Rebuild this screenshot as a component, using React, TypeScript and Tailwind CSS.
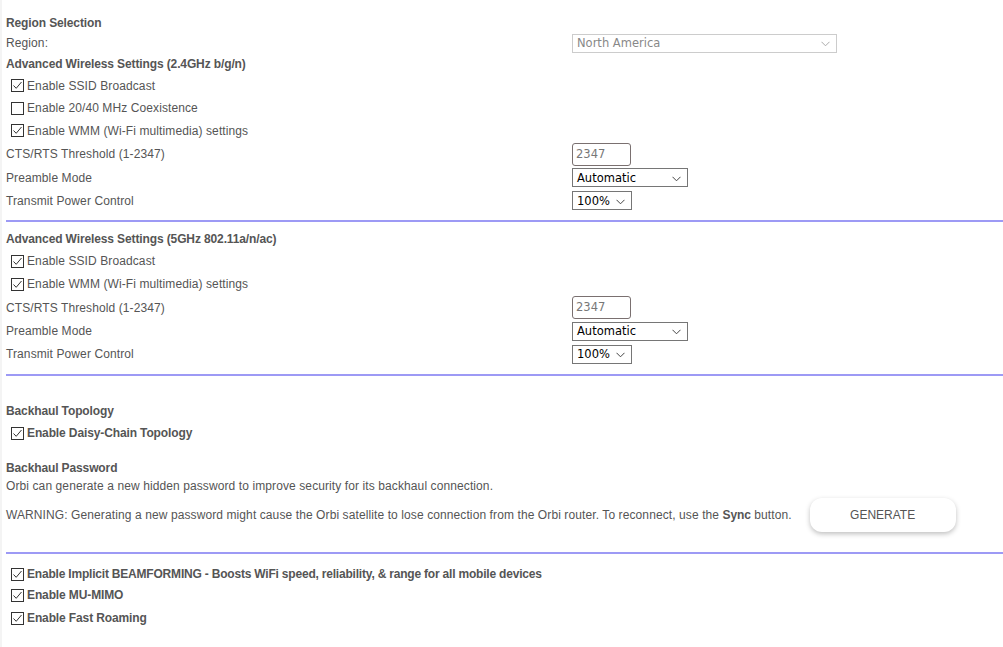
import React from 'react';

const Check = ({ checked }: { checked: boolean }) => (
  <span className="ml-[5px] mr-[3px] inline-flex h-[13px] w-[13px] shrink-0 items-center justify-center border border-[#333] bg-white">
    {checked && (
      <svg width="11" height="11" viewBox="0 0 11 11" fill="none">
        <path d="M1.5 5.5 L4.2 8.3 L9.5 2" stroke="#333" strokeWidth="1" />
      </svg>
    )}
  </span>
);

const Chevron = ({ color }: { color: string }) => (
  <svg width="9" height="6" viewBox="0 0 9 6" fill="none" className="shrink-0">
    <path d="M0.5 0.8 L4.5 4.8 L8.5 0.8" stroke={color} strokeWidth="1" />
  </svg>
);

const Select = ({ value, width, light }: { value: string; width: string; light?: boolean }) => (
  <div
    className={`flex h-[19px] items-center justify-between pl-[4px] pr-[6px] pt-[2px] font-['DejaVu_Sans',sans-serif] text-[11.5px] leading-none tracking-normal ${width} ${
      light ? 'border border-[#ccc] text-[#888]' : 'border border-[#767676] text-black'
    }`}
  >
    <span>{value}</span>
    <Chevron color={light ? '#aaa' : '#444'} />
  </div>
);

const Row = ({ h, label, bold, checked, children }: { h: string; label: React.ReactNode; bold?: boolean; checked?: boolean; children?: React.ReactNode }) => (
  <div className={`grid grid-cols-[566px_1fr] items-center ${h}`}>
    <div className={`flex items-center ${bold ? 'font-bold tracking-[-0.12px]' : ''}`}>
      {checked !== undefined && <Check checked={checked} />}
      <span>{label}</span>
    </div>
    <div className="flex items-center">{children}</div>
  </div>
);

const Divider = ({ mt }: { mt: string }) => <div className={`h-[2px] bg-[#9d9af5] ${mt}`} />;

const ThresholdInput = () => (
  <div className="flex h-[23px] w-[59px] items-center rounded-[3px] border border-[#7a7070] pl-[3px] pt-[1px] font-['DejaVu_Sans',sans-serif] text-[11.5px] leading-none tracking-normal text-[#777]">
    2347
  </div>
);

export default function App() {
  return (
    <div className="flex min-h-[647px] w-[1003px] bg-white font-['Liberation_Sans',Arial,sans-serif] text-[12px] tracking-[0.1px] text-[#555]">
      <div className="w-[2px] shrink-0 bg-[#f4f4f4]" />
      <div className="flex-1 pl-[4px] pt-[12px]">
        {/* 2.4GHz */}
        <Row h="h-[21px]" label="Region Selection" bold />
        <Row h="h-[20px]" label="Region:">
          <Select value="North America" width="w-[265px]" light />
        </Row>
        <Row h="h-[21px]" label="Advanced Wireless Settings (2.4GHz b/g/n)" bold />
        <Row h="h-[23px]" label="Enable SSID Broadcast" checked />
        <Row h="h-[22px]" label="Enable 20/40 MHz Coexistence" checked={false} />
        <Row h="h-[23px]" label="Enable WMM (Wi-Fi multimedia) settings" checked />
        <Row h="h-[24px]" label="CTS/RTS Threshold (1-2347)">
          <ThresholdInput />
        </Row>
        <Row h="h-[23px]" label="Preamble Mode">
          <Select value="Automatic" width="w-[116px]" />
        </Row>
        <Row h="h-[23px]" label="Transmit Power Control">
          <Select value="100%" width="w-[60px]" />
        </Row>
        <Divider mt="mt-[8px]" />

        {/* 5GHz */}
        <div className="mt-[6px]" />
        <Row h="h-[22px]" label="Advanced Wireless Settings (5GHz 802.11a/n/ac)" bold />
        <Row h="h-[22px]" label="Enable SSID Broadcast" checked />
        <Row h="h-[24px]" label="Enable WMM (Wi-Fi multimedia) settings" checked />
        <Row h="h-[23px]" label="CTS/RTS Threshold (1-2347)">
          <ThresholdInput />
        </Row>
        <Row h="h-[24px]" label="Preamble Mode">
          <Select value="Automatic" width="w-[116px]" />
        </Row>
        <Row h="h-[22px]" label="Transmit Power Control">
          <Select value="100%" width="w-[60px]" />
        </Row>
        <Divider mt="mt-[9px]" />

        {/* Backhaul */}
        <div className="mt-[25px] flex h-[20px] items-center font-bold tracking-[-0.12px]">Backhaul Topology</div>
        <div className="flex h-[24px] items-center font-bold tracking-[-0.12px]">
          <Check checked />
          <span>Enable Daisy-Chain Topology</span>
        </div>
        <div className="mt-[13px] flex h-[20px] items-center font-bold tracking-[-0.12px]">Backhaul Password</div>
        <div className="flex h-[16px] items-center">
          Orbi can generate a new hidden password to improve security for its backhaul connection.
        </div>
        <div className="mt-[4px] flex h-[34px] items-center">
          <span>
            WARNING: Generating a new password might cause the Orbi satellite to lose connection from the Orbi router. To
            reconnect, use the <b className="tracking-[-0.12px]">Sync</b> button.
          </span>
          <button className="ml-[18px] flex h-[34px] w-[146px] items-center justify-center rounded-[12px] bg-white text-[12px] tracking-normal text-[#555] shadow-[0_2px_5px_rgba(0,0,0,0.25)]">
            GENERATE
          </button>
        </div>
        <Divider mt="mt-[20px]" />

        {/* Features */}
        <div className="mt-[10px] flex h-[20px] items-center font-bold tracking-[-0.2px]">
          <Check checked />
          <span>Enable Implicit BEAMFORMING - Boosts WiFi speed, reliability, &amp; range for all mobile devices</span>
        </div>
        <div className="flex h-[22px] items-center font-bold tracking-[-0.12px]">
          <Check checked />
          <span>Enable MU-MIMO</span>
        </div>
        <div className="flex h-[24px] items-center font-bold tracking-[-0.12px]">
          <Check checked />
          <span>Enable Fast Roaming</span>
        </div>
      </div>
    </div>
  );
}
